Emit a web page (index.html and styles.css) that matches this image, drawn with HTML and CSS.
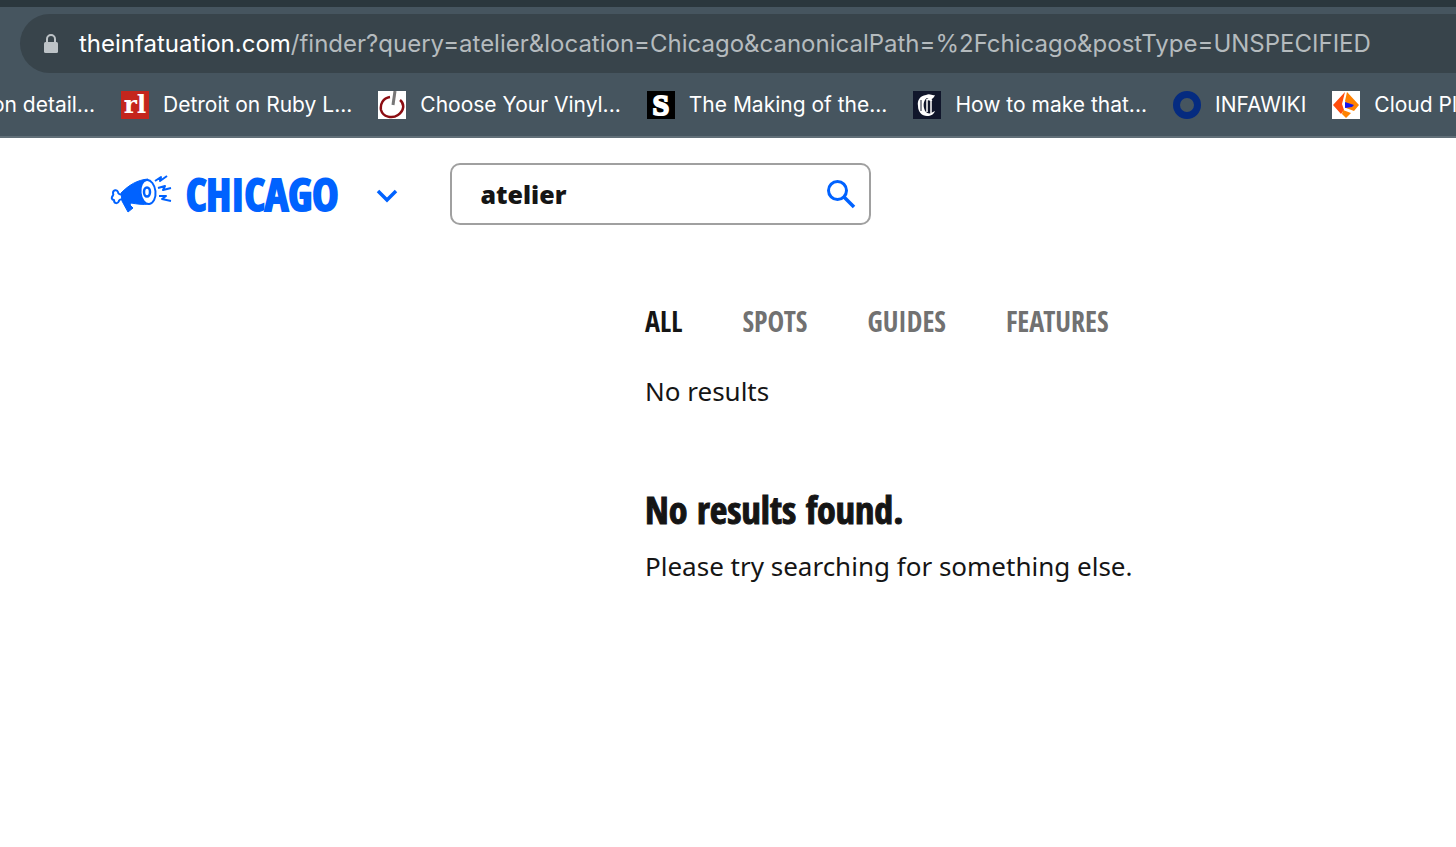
FILE: index.html
```html
<!DOCTYPE html>
<html lang="en">
<head>
<meta charset="utf-8">
<title>Finder - Chicago</title>
<link rel="stylesheet" href="styles.css">
</head>
<body>
<div class="browser">
  <div class="address">
    <svg class="lock" viewBox="0 0 16 20" aria-hidden="true"><path d="M4 9V5a4 4 0 0 1 8 0v4" fill="none" stroke="#bdc3c7" stroke-width="2"/><rect x="1" y="8" width="14" height="11" rx="1.500" fill="#bdc3c7"/></svg>
    <p class="url"><span class="host">theinfatuation.com</span>/finder?query=atelier&amp;location=Chicago&amp;canonicalPath=%2Fchicago&amp;postType=UNSPECIFIED</p>
  </div>
  <nav class="bookmarks" aria-label="Bookmarks">
    <a class="bookmark clipped" href="#">on detail...</a>
    <a class="bookmark" href="#"><span class="favicon ruby" aria-hidden="true">rl</span>Detroit on Ruby L...</a>
    <a class="bookmark" href="#"><svg class="favicon" viewBox="0 0 28 28" aria-hidden="true"><path fill="#fff" d="M0 0h28v28H0z"/><path d="M12 6C5 7 2 13 3 19c2 7 11 9 17 5 6-4 7-11 2-15" fill="none" stroke="#8b0d12" stroke-width="2.500"/><path d="M17 0l-2 14" stroke="#777" stroke-width="3"/></svg>Choose Your Vinyl...</a>
    <a class="bookmark" href="#"><span class="favicon stranger" aria-hidden="true">S</span>The Making of the...</a>
    <a class="bookmark" href="#"><svg class="favicon" viewBox="0 0 28 28" aria-hidden="true"><path fill="#10162b" d="M0 0h28v28H0z"/><path fill="#fff" d="M13 4C7 5 4 9 5 15c0 6 4 10 9 10 4 0 7-2 8-5l-2 1c-4 3-8 1-9-4-1-4 0-8 3-10 3 2 6 2 8-3-3 1-5-2-9 0z"/><path d="M14 8v13M18 8v14M14 9c2-2 3 1 5 0" fill="none" stroke="#fff" stroke-width="1.500"/><path d="M8 9v11" stroke="#10162b"/></svg>How to make that...</a>
    <a class="bookmark" href="#"><svg class="favicon" viewBox="0 0 28 28" aria-hidden="true"><circle cx="14" cy="14" r="10.500" fill="none" stroke="#052b80" stroke-width="7"/></svg>INFAWIKI</a>
    <a class="bookmark" href="#"><svg class="favicon" viewBox="0 0 28 28" aria-hidden="true"><path fill="#fff" d="M0 0h28v28H0z"/><path fill="#ff4d0d" d="M13 1L1 14l8 9 3-4-2-6z"/><path fill="#ff8200" d="M15 1l12 13-5 6-8-3 0-5-1-2zM11 19l8 3-5 5-4-4z"/><path fill="#1414f0" d="M13 11l9 3-2 2-7 1z"/></svg>Cloud Pl</a>
  </nav>
</div>
<header class="site-header">
  <a class="brand" href="#">
    <svg class="logo" viewBox="0 0 62 38" aria-hidden="true"><g fill="none" stroke="#0062ff" stroke-linejoin="round"><path d="M13 19c-3 1-5 0-5-2-1-3-5-2-5 1 1 2 0 2-1 4-1 2 1 3 2 3 0 4 4 4 5 1 0-2 3-2 6-2" stroke-width="2" fill="#fff"/><path fill="#0062ff" d="M11 18C19 10 27 5 38 4l1 25c-6 1-12 0-18-1l-1 2 3 3-5 4-6-11z"/><ellipse cx="38" cy="17" rx="7.500" ry="12" stroke-width="2" fill="#fff" transform="rotate(-6 38 17)"/><ellipse cx="37" cy="17" rx="3" ry="4.500" stroke-width="2.500"/><path d="M45 6l6-4-1 4 7-5M48 13l7-2-2 4 8-2M49 21h7l-4 3 9 2" stroke-width="2"/></g></svg>
    CHICAGO
  </a>
  <button class="city-toggle" type="button" aria-label="Choose city"><svg viewBox="0 0 22 18" aria-hidden="true"><path d="M2 6l9 9 9-9" fill="none" stroke="#0062ff" stroke-width="3.500"/></svg></button>
  <form class="search" role="search">
    <input type="text" value="atelier" aria-label="Search">
    <button type="button" aria-label="Search"><svg viewBox="0 0 30 30" aria-hidden="true"><circle cx="11.500" cy="11.500" r="9" fill="none" stroke="#0062ff" stroke-width="3"/><path d="M18 18l10 10" stroke="#0062ff" stroke-width="3.500"/></svg></button>
  </form>
</header>
<main class="results">
  <nav class="tabs" aria-label="Result type">
    <button class="tab active" type="button">ALL</button>
    <button class="tab" type="button">SPOTS</button>
    <button class="tab" type="button">GUIDES</button>
    <button class="tab" type="button">FEATURES</button>
  </nav>
  <p class="count">No results</p>
  <h1>No results found.</h1>
  <p>Please try searching for something else.</p>
</main>
</body>
</html>
```
FILE: styles.css
```css
* { box-sizing: border-box; }
body { margin: 0; background: #fff; color: #151515; font-family: "Noto Sans", sans-serif; overflow-x: hidden; }
p, h1 { margin: 0; }
a { color: inherit; text-decoration: none; }
button { padding: 0; border: 0; background: none; font: inherit; cursor: pointer; }
svg { display: block; flex: none; }

.browser { overflow: hidden; padding-top: 7px; border-top: 7px solid #2b373d; border-bottom: 2px solid #616f78; background: #46555f; font-family: Inter, sans-serif; }
.address { display: flex; align-items: center; gap: 20px; height: 59px; margin-left: 20px; padding-left: 23px; border-radius: 30px 0 0 30px; background: #38444b; white-space: nowrap; }
.lock { width: 16px; height: 20px; }
.url { color: #b5bbbe; font-size: 24px; }
.host { color: #fff; }
.bookmarks { display: flex; gap: 26px; height: 63px; align-items: center; color: #fff; font-size: 21px; white-space: nowrap; }
.bookmark { display: flex; flex: none; align-items: center; gap: 14px; }
.clipped { width: 95px; overflow: hidden; justify-content: flex-end; }
.favicon { display: flex; width: 28px; height: 28px; align-items: center; justify-content: center; color: #fff; }
.ruby { background: #c4261d; font: bold 25px/28px "DejaVu Serif", serif; }
.stranger { background: #000; font: bold 30px/28px "Liberation Serif", serif; -webkit-text-stroke: 2px #fff; }

.site-header { display: flex; align-items: center; padding: 25px 110px 0; }
.brand { display: flex; align-items: center; gap: 14px; color: #0062ff; font: bold 44px/60px "Open Sans Condensed", sans-serif; -webkit-text-stroke: 2px #0062ff; }
.logo { width: 62px; height: 38px; }
.city-toggle { margin-left: 38px; }
.city-toggle svg { width: 22px; height: 18px; }
.search { display: flex; align-items: center; width: 421px; height: 62px; margin-left: 52px; padding: 0 13px 0 28px; border: 2px solid #a0a0a0; border-radius: 10px; }
.search input { flex: 1; min-width: 0; padding: 0; border: 0; outline: 0; background: none; color: #151515; font: 900 25px "Noto Sans", sans-serif; }
.search svg { width: 30px; height: 30px; }

.results { margin-left: 645px; padding-top: 79px; font-size: 26px; line-height: 36px; }
.tabs { display: flex; gap: 60px; margin-bottom: 35px; }
.tab { color: #717171; font: bold 28px/34px "Open Sans Condensed", sans-serif; }
.active { color: #151515; }
.count { margin-bottom: 75px; }
h1 { margin-bottom: 14px; font: bold 38px/50px "Open Sans Condensed", sans-serif; -webkit-text-stroke: 1px; }
```
